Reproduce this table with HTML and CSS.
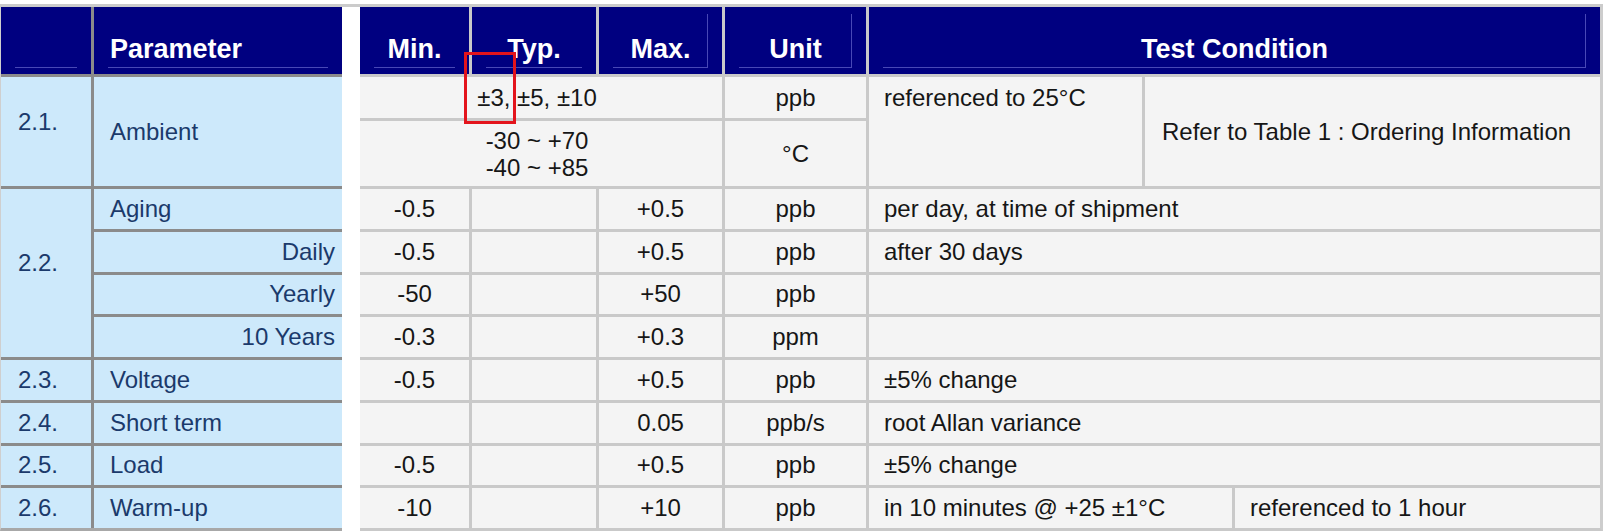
FILE: index.html
```html
<!DOCTYPE html>
<html lang="en">
<head>
<meta charset="utf-8">
<title>Frequency Stability</title>
<link rel="stylesheet" href="styles.css">
</head>
<body>
<div class="sheet">
  <div class="grid left">
    <div class="hd"></div>
    <div class="hd hd-start">Parameter</div>

    <div class="lb idx rs2 lift">2.1.</div>
    <div class="lb name rs2">Ambient</div>

    <div class="lb idx rs4 lift">2.2.</div>
    <div class="lb name">Aging</div>
    <div class="lb name end">Daily</div>
    <div class="lb name end">Yearly</div>
    <div class="lb name end">10 Years</div>

    <div class="lb idx">2.3.</div>
    <div class="lb name">Voltage</div>
    <div class="lb idx">2.4.</div>
    <div class="lb name">Short term</div>
    <div class="lb idx">2.5.</div>
    <div class="lb name">Load</div>
    <div class="lb idx">2.6.</div>
    <div class="lb name">Warm-up</div>
  </div>

  <div class="grid right">
    <div class="hd">Min.</div>
    <div class="hd">Typ.</div>
    <div class="hd edge">Max.</div>
    <div class="hd edge">Unit</div>
    <div class="hd edge cs3">Test Condition</div>

    <div class="c cs3 shift">±3, ±5, ±10</div>
    <div class="c">ppb</div>
    <div class="c l rs2 top">referenced to 25°C</div>
    <div class="c l rs2 cs2 wide">Refer to Table 1 : Ordering Information</div>

    <div class="c cs3 shift multi"><span>-30 ~ +70<br>-40 ~ +85</span></div>
    <div class="c">°C</div>

    <div class="c">-0.5</div><div class="c"></div><div class="c">+0.5</div><div class="c">ppb</div>
    <div class="c l cs3">per day, at time of shipment</div>

    <div class="c">-0.5</div><div class="c"></div><div class="c">+0.5</div><div class="c">ppb</div>
    <div class="c l cs3">after 30 days</div>

    <div class="c">-50</div><div class="c"></div><div class="c">+50</div><div class="c">ppb</div>
    <div class="c l cs3"></div>

    <div class="c">-0.3</div><div class="c"></div><div class="c">+0.3</div><div class="c">ppm</div>
    <div class="c l cs3"></div>

    <div class="c">-0.5</div><div class="c"></div><div class="c">+0.5</div><div class="c">ppb</div>
    <div class="c l cs3">±5% change</div>

    <div class="c"></div><div class="c"></div><div class="c">0.05</div><div class="c">ppb/s</div>
    <div class="c l cs3">root Allan variance</div>

    <div class="c">-0.5</div><div class="c"></div><div class="c">+0.5</div><div class="c">ppb</div>
    <div class="c l cs3">±5% change</div>

    <div class="c">-10</div><div class="c"></div><div class="c">+10</div><div class="c">ppb</div>
    <div class="c l cs2">in 10 minutes @ +25 ±1°C</div>
    <div class="c l">referenced to 1 hour</div>
  </div>

  <div class="mark"></div>
</div>
</body>
</html>
```

FILE: styles.css
```css
* {
  box-sizing: border-box;
}

body {
  margin: 0;
  padding-top: 4px;
  background: #ffffff;
  font-family: "Liberation Sans", Arial, Helvetica, sans-serif;
}

.sheet {
  position: relative;
  display: flex;
  gap: 18px;
  width: 1603px;
  border-top: 3px solid #cbcbcb;
}

.grid {
  display: grid;
  grid-template-rows: 67px 41px 65px repeat(8, 39.75px);
  row-gap: 3px;
  column-gap: 3px;
  border-bottom: 3px solid #c9c9c9;
}

.left {
  grid-template-columns: 90px 248px;
  background: #8b8b8b;
  border-left: 1px solid #cfcfcf;
  border-bottom-color: #a8a8a8;
}

.right {
  grid-template-columns: 109px 124px 123px 141px 273px 87px 365px;
  background: #c9c9c9;
  border-right: 3px solid #cdcdcd;
}

/* header cells */
.hd {
  position: relative;
  display: flex;
  align-items: flex-end;
  justify-content: center;
  padding-bottom: 9px;
  background: #000080;
  color: #ffffff;
  font-size: 27px;
  font-weight: 700;
  line-height: 32px;
}

.hd::after {
  content: "";
  position: absolute;
  left: 14px;
  right: 14px;
  top: 7px;
  bottom: 6px;
  border-bottom: 1px solid #4848b6;
}

.hd.edge::after {
  border-right: 1px solid #4848b6;
}

.hd-start {
  justify-content: flex-start;
  padding-left: 16px;
}

/* left (parameter) cells */
.lb {
  display: flex;
  align-items: center;
  background: #cde9fb;
  color: #1b3a6b;
  font-size: 24px;
  line-height: 28px;
}

.idx {
  grid-column: 1;
  padding-left: 17px;
}

.name {
  grid-column: 2;
  padding-left: 16px;
}

.name.end {
  justify-content: flex-end;
  padding-left: 0;
  padding-right: 7px;
}

.lift {
  padding-bottom: 20px;
}

.rs2 {
  grid-row: span 2;
}

.rs4 {
  grid-row: span 4;
}

/* right (value) cells */
.c {
  display: flex;
  align-items: center;
  justify-content: center;
  background: #f4f4f4;
  color: #161616;
  font-size: 24px;
  line-height: 28px;
}

.c.l {
  justify-content: flex-start;
  padding-left: 15px;
}

.c.wide {
  padding-left: 17px;
}

.cs3 {
  grid-column: span 3;
}

.cs2 {
  grid-column: span 2;
}

.shift {
  padding-right: 8px;
}

.multi {
  line-height: 27px;
  text-align: center;
}

.top {
  align-items: flex-start;
  padding-top: 7px;
}

/* annotation box */
.mark {
  position: absolute;
  left: 464px;
  top: 45px;
  width: 52px;
  height: 72px;
  border: 3px solid #e3141c;
}
```
